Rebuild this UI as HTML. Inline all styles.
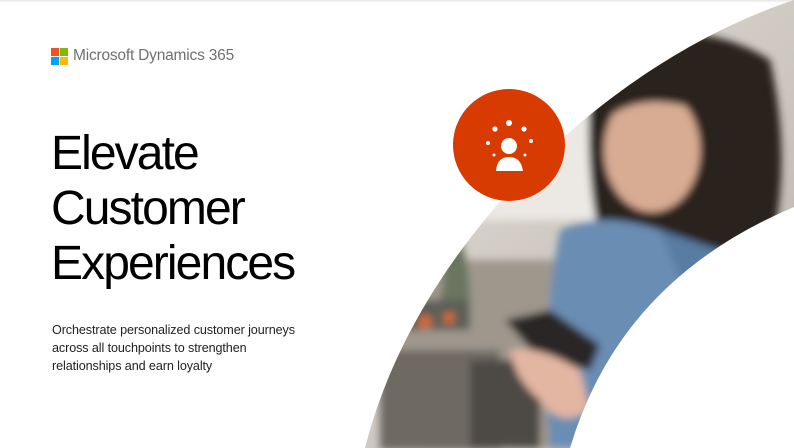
<!DOCTYPE html>
<html><head><meta charset="utf-8"><style>
html,body{margin:0;padding:0}
body{width:794px;height:448px;position:relative;overflow:hidden;background:#fff;font-family:"Liberation Sans",sans-serif}
.top{position:absolute;left:0;top:0;width:794px;height:3px;background:linear-gradient(#e6e6e6,#fff)}
.logo{position:absolute;left:51px;top:48px}
.logo i{position:absolute;width:8px;height:8px}
.brand{position:absolute;left:73px;top:47px;font-size:15.5px;color:#707070;letter-spacing:-0.2px}
h1{position:absolute;left:51px;top:126px;margin:0;font-weight:normal;font-size:48px;line-height:55px;color:#000;letter-spacing:-1.9px}
p{position:absolute;left:52px;top:321px;margin:0;font-size:12.6px;line-height:18px;color:#222;letter-spacing:-0.1px}
svg{position:absolute;left:0;top:0}
</style></head><body>
<div class="top"></div>
<div class="logo"><i style="left:0;top:0;background:#f25022"></i><i style="left:9px;top:0;background:#7fba00"></i><i style="left:0;top:9px;background:#00a4ef"></i><i style="left:9px;top:9px;background:#ffb900"></i></div>
<div class="brand">Microsoft Dynamics 365</div>
<h1>Elevate<br>Customer<br>Experiences</h1>
<p>Orchestrate personalized customer journeys<br>across all touchpoints to strengthen<br>relationships and earn loyalty</p>
<svg width="794" height="448" viewBox="0 0 794 448">
<defs>
<clipPath id="c"><path d="M365 448 C415 250 600 65 794 0 L794 207 Q620 280 570 448 Z"/></clipPath>
<linearGradient id="bg" x1="0" y1="0" x2="1" y2="1"><stop offset="0" stop-color="#e8e4de"/><stop offset="1" stop-color="#b7b1a8"/></linearGradient>
<filter id="b"><feGaussianBlur stdDeviation="4"/></filter>
</defs>
<g clip-path="url(#c)">
<rect x="340" y="0" width="454" height="448" fill="url(#bg)"/>
<g filter="url(#b)">
<rect x="470" y="100" width="130" height="120" fill="#ece9e4"/>
<rect x="380" y="260" width="200" height="188" fill="#9f978c"/>
<rect x="380" y="350" width="120" height="100" fill="#6e6a64"/>
<rect x="470" y="360" width="70" height="88" fill="#4e4a45"/>
<rect x="400" y="300" width="70" height="30" fill="#5d5e58"/>
<circle cx="425" cy="322" r="7" fill="#d56b33"/><circle cx="449" cy="318" r="6" fill="#d56b33"/>
<path d="M430 230 Q450 260 440 300 L470 300 Q470 250 450 220 Z" fill="#6b7660"/>
<path d="M595 45 Q700 15 770 60 Q790 150 775 230 L700 260 L600 240 Q580 150 595 45 Z" fill="#2a221f"/>
<ellipse cx="652" cy="150" rx="48" ry="62" fill="#d8ac93"/>
<path d="M595 45 Q690 20 760 70 L700 110 Q640 90 605 120 Z" fill="#2a221f"/>
<path d="M560 230 Q600 210 660 230 L720 250 L640 448 L550 448 Q540 330 560 230 Z" fill="#6a8db3"/>
<path d="M660 230 L720 250 L690 300 Z" fill="#587ba2"/>
<path d="M505 320 L550 310 L600 345 L590 370 L540 360 Z" fill="#2c2626"/>
<path d="M510 350 Q540 345 580 370 L590 410 Q560 430 540 400 Q515 380 510 350 Z" fill="#e3b6a2"/>
</g>
</g>
<circle cx="509" cy="145" r="56" fill="#d83b01"/>
<g fill="#fff">
<circle cx="509" cy="123" r="3"/><circle cx="495" cy="129" r="2.6"/><circle cx="524" cy="129" r="2.6"/>
<circle cx="488" cy="143" r="2"/><circle cx="531" cy="141" r="2"/><circle cx="494" cy="155" r="1.5"/><circle cx="525" cy="155" r="1.5"/>
<circle cx="509" cy="146" r="8"/>
<path d="M496 171 Q497 157 509 157 Q521 157 523 171 Z"/>
</g>
</svg>
</body></html>
